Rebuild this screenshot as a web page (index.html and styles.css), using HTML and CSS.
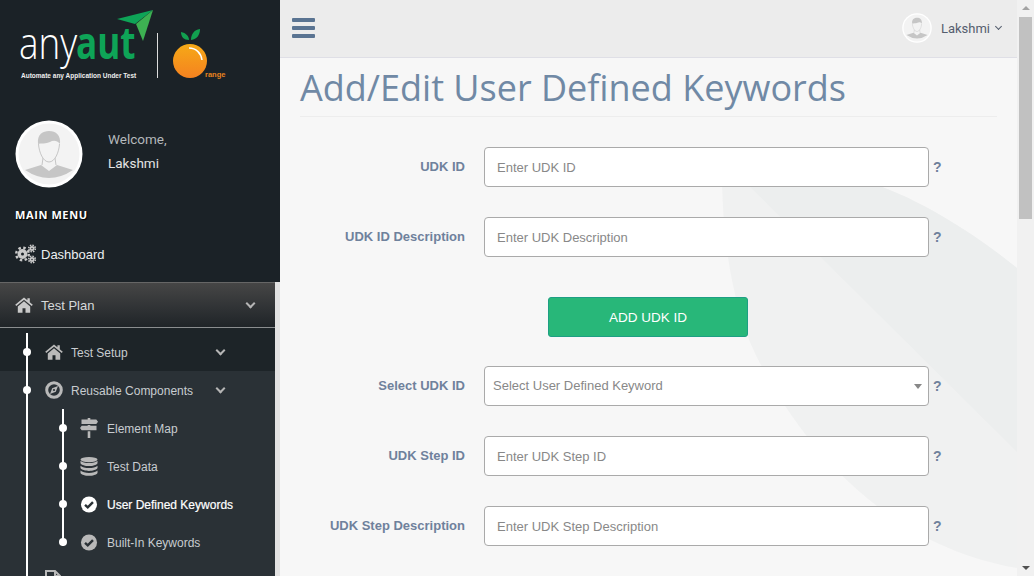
FILE: index.html

```html
<!DOCTYPE html>
<html lang="en">
<head>
    <meta charset="UTF-8">
    <meta name="viewport" content="width=device-width, initial-scale=1.0">
    <title>Add/Edit User Defined Keywords</title>
    <link rel="stylesheet" href="styles.css">
</head>
<body>

<svg class="defs" width="0" height="0">
    <symbol id="i-home" viewBox="0 0 18 16">
        <path d="M9 .5.2 7.800l1.100 1.300L9 2.700l7.700 6.400 1.100-1.300-3-2.500V1.200h-2.400v2.100z"/>
        <path d="M2.800 9.400 9 4.200l6.200 5.200V15.800h-4.700v-4.500h-3v4.500H2.800z"/>
    </symbol>
    <symbol id="i-check" viewBox="0 0 18 18">
        <circle cx="9" cy="9" r="8.500"/>
        <path d="M4.800 9.300 7.700 12l5.500-5.500" fill="none" stroke="#2a3136" stroke-width="2.600"/>
    </symbol>
    <symbol id="i-user" viewBox="0 0 68 68">
        <circle cx="34" cy="34" r="33.500" fill="#fff"/>
        <circle cx="34" cy="34" r="30.500" fill="#f3f3f3"/>
        <path d="M10 50 26 45l8 6 8-6 16 5Q34 66 10 50z" fill="#c6c6c6"/>
        <path d="M23.500 24C24 32 28 42 34 42s10-10 10.500-18M28 38l-1 7M40 38l1 7" fill="none" stroke="#c6c6c6"/>
        <path d="M23 24C22 14 28 11 34 11c7 0 12 4 11 13-3-4-7-4-10-2-4 2-9 1-12 2z" fill="#c6c6c6"/>
    </symbol>
</svg>

<aside class="sidebar">
    <div class="sidebar-top">
        <svg class="logo" width="240" height="90" viewBox="0 0 240 90">
            <polygon points="117,19 153,10 135,24" fill="#0ea457"/>
            <polygon points="153,10 136,24 143,41" fill="#3db152"/>
            <text transform="translate(19 59) scale(.82 1)" class="logo-any">any</text>
            <text transform="translate(76 59) scale(.78 1)" class="logo-aut">aut</text>
            <text x="21" y="77.500" class="logo-tag">Automate any Application Under Test</text>
            <rect x="157" y="33" width="1" height="45" fill="#ddd"/>
            <defs>
                <linearGradient id="orange" x1="0" y1="0" x2="0" y2="1">
                    <stop offset="0" stop-color="#f6a917"/>
                    <stop offset="1" stop-color="#f58220"/>
                </linearGradient>
            </defs>
            <circle cx="190" cy="61" r="17" fill="url(#orange)"/>
            <path d="M189 48c7 0 12 5 13 12" fill="none" stroke="#fff" stroke-width="1.500"/>
            <path d="M181 32c5 1 8 4 8 8-5 0-8-3-8-8zM200 29c0 6-3 10-9 11 0-6 3-10 9-11z" fill="#12a04f"/>
            <text x="205" y="77" class="logo-range">range</text>
        </svg>
        <div class="profile">
            <svg class="profile-pic" width="68" height="68"><use href="#i-user"/></svg>
            <div class="profile-text">
                <span class="welcome">Welcome,</span>
                <span class="profile-name">Lakshmi</span>
            </div>
        </div>
        <h3 class="menu-title">MAIN MENU</h3>
        <a class="dash-link">
            <svg class="nav-icon" width="22" height="20" viewBox="0 0 22 20">
                <g fill="none" stroke="#c9c9c9">
                    <circle cx="7.500" cy="10" r="3.200" stroke-width="3.400"/>
                    <circle cx="7.500" cy="10" r="6.300" stroke-width="2.400" stroke-dasharray="2.500 2.450"/>
                    <circle cx="17" cy="4.500" r="1.600" stroke-width="1.800"/>
                    <circle cx="17" cy="4.500" r="3.300" stroke-width="1.600" stroke-dasharray="1.500 1.090"/>
                    <circle cx="17" cy="15.500" r="1.600" stroke-width="1.800"/>
                    <circle cx="17" cy="15.500" r="3.300" stroke-width="1.600" stroke-dasharray="1.500 1.090"/>
                </g>
            </svg>
            Dashboard
        </a>
    </div>

    <nav class="side-nav">
        <div class="nav-head">
            <svg class="nav-icon" width="18" height="16"><use href="#i-home"/></svg>
            <span>Test Plan</span>
            <i class="chev"></i>
        </div>
        <ul class="tree">
            <li class="tree-item tree-active">
                <svg class="nav-icon" width="18" height="16"><use href="#i-home"/></svg>
                <span>Test Setup</span>
                <i class="chev"></i>
            </li>
            <li class="tree-item">
                <svg class="nav-icon" width="18" height="18" viewBox="0 0 18 18">
                    <circle cx="9" cy="9" r="7.300" fill="none" stroke="currentColor" stroke-width="3"/>
                    <path d="M13 5 10.800 10.800 5 13 7.200 7.200z"/>
                    <circle cx="9" cy="9" r="1.100" fill="#2a3136"/>
                </svg>
                <span>Reusable Components</span>
                <i class="chev"></i>
            </li>
            <li>
                <ul class="tree sub-tree">
                    <li class="tree-item">
                        <svg class="nav-icon" width="18" height="20" viewBox="0 0 18 20">
                            <path d="M7.700 0h2.600v1.500h6L18 3.700l-1.700 2.200H1.500V1.500h6.200zM7.700 7h2.600v.8h6.200v4.400H1.700L0 10l1.700-2.200h6zM7.700 13.200h2.600V20H7.700z"/>
                        </svg>
                        <span>Element Map</span>
                    </li>
                    <li class="tree-item">
                        <svg class="nav-icon" width="17" height="19" viewBox="0 0 17 19">
                            <ellipse cx="8.500" cy="2.600" rx="8.500" ry="2.600"/>
                            <path d="M0 3.800c1.500 1.700 5 2.300 8.500 2.300s7-.6 8.500-2.300v2.400c-1 1.900-5 2.800-8.500 2.800S1 8.100 0 6.200z"/>
                            <path transform="translate(0 4.900)" d="M0 3.800c1.500 1.700 5 2.300 8.500 2.300s7-.6 8.500-2.300v2.400c-1 1.900-5 2.800-8.500 2.800S1 8.100 0 6.200z"/>
                            <path transform="translate(0 9.800)" d="M0 3.800c1.500 1.700 5 2.300 8.500 2.300s7-.6 8.500-2.300v2.400c-1 1.900-5 2.800-8.500 2.800S1 8.100 0 6.200z"/>
                        </svg>
                        <span>Test Data</span>
                    </li>
                    <li class="tree-item tree-current">
                        <svg class="nav-icon" width="17" height="17"><use href="#i-check"/></svg>
                        <span>User Defined Keywords</span>
                    </li>
                    <li class="tree-item">
                        <svg class="nav-icon" width="17" height="17"><use href="#i-check"/></svg>
                        <span>Built-In Keywords</span>
                    </li>
                </ul>
            </li>
            <li class="tree-item tree-last">
                <svg class="nav-icon" width="16" height="20" viewBox="0 0 16 20">
                    <path d="M1 1h9l5 5v13H1z" fill="none" stroke="currentColor" stroke-width="2"/>
                    <path d="M10 1v5h5" fill="none" stroke="currentColor" stroke-width="2"/>
                </svg>
            </li>
        </ul>
    </nav>
</aside>

<div class="main">
    <svg class="swirl" width="737" height="576" viewBox="280 0 737 576">
        <path class="swirl-light" d="M722 170C722 230 730 310 762 367 790 420 830 470 877 506 920 540 970 560 1017 568V268C960 222 900 190 860 180 820 172 770 168 722 170z"/>
        <path class="swirl-dark" d="M733 170 1017 452V268C960 222 900 190 860 180 820 172 770 168 733 170z"/>
    </svg>

    <header class="topbar">
        <div class="hamburger"><span></span><span></span><span></span></div>
        <div class="user-menu">
            <svg class="user-pic" width="30" height="30"><use href="#i-user"/></svg>
            <span>Lakshmi</span>
            <i class="chev-thin"></i>
        </div>
    </header>

    <div class="content">
        <h1>Add/Edit User Defined Keywords</h1>

        <form class="udk-form">
            <div class="form-row">
                <label for="udkId">UDK ID</label>
                <input type="text" id="udkId" placeholder="Enter UDK ID">
                <b class="help">?</b>
            </div>
            <div class="form-row">
                <label for="udkDesc">UDK ID Description</label>
                <input type="text" id="udkDesc" placeholder="Enter UDK Description">
                <b class="help">?</b>
            </div>
            <div class="button-row">
                <button type="button">ADD UDK ID</button>
            </div>
            <div class="form-row">
                <label for="udkSelect">Select UDK ID</label>
                <div class="select-wrap">
                    <select id="udkSelect">
                        <option>Select User Defined Keyword</option>
                    </select>
                </div>
                <b class="help">?</b>
            </div>
            <div class="form-row">
                <label for="stepId">UDK Step ID</label>
                <input type="text" id="stepId" placeholder="Enter UDK Step ID">
                <b class="help">?</b>
            </div>
            <div class="form-row">
                <label for="stepDesc">UDK Step Description</label>
                <input type="text" id="stepDesc" placeholder="Enter UDK Step Description">
                <b class="help">?</b>
            </div>
        </form>
    </div>
</div>

<div class="scrollbar">
    <i class="arrow-up"></i>
    <div class="thumb"></div>
    <i class="arrow-down"></i>
</div>

</body>
</html>
```

FILE: styles.css

```css
* {
    box-sizing: border-box;
}

html, body {
    height: 576px;
    overflow: hidden;
}

body {
    display: flex;
    margin: 0;
    font-family: "Liberation Sans", Arial, sans-serif;
    background-color: #f7f7f7;
}

.defs {
    position: absolute;
}

/* sidebar */
.sidebar {
    width: 280px;
    height: 576px;
    flex: none;
    overflow: hidden;
    background: #e2e2e2;
}

.sidebar-top {
    height: 282px;
    background: #1b2227;
}

.logo {
    display: block;
}

.logo-any {
    font-family: "Open Sans", sans-serif;
    font-weight: 300;
    font-size: 45px;
    fill: #fff;
}

.logo-aut {
    font-family: "Open Sans", sans-serif;
    font-weight: 700;
    font-size: 45px;
    fill: #0ea457;
}

.logo-tag {
    font-family: "Liberation Sans", sans-serif;
    font-weight: 700;
    font-size: 6.500px;
    fill: #eee;
}

.logo-range {
    font-family: "Liberation Sans", sans-serif;
    font-weight: 700;
    font-size: 7.500px;
    fill: #e8821e;
}

.profile {
    display: flex;
    align-items: center;
    gap: 25px;
    padding: 30px 0 0 15px;
}

.profile-pic {
    display: block;
}

.profile-text {
    display: flex;
    flex-direction: column;
    gap: 7px;
    margin-top: -6px;
    font-family: Roboto, sans-serif;
    font-size: 13.500px;
    line-height: 17px;
}

.welcome {
    color: #b4b8bb;
}

.profile-name {
    color: #e4e4e4;
}

.menu-title {
    margin: 20px 0 0 15px;
    font-family: "Open Sans", sans-serif;
    font-size: 11px;
    font-weight: 700;
    line-height: 14px;
    letter-spacing: .6px;
    color: #fff;
    text-shadow: 1px 1px 1px #000;
}

.dash-link {
    display: flex;
    align-items: center;
    gap: 4px;
    margin: 22px 0 0 15px;
    height: 20px;
    font-size: 13px;
    color: #eceff1;
}

.nav-icon {
    flex: none;
    fill: currentColor;
}

.side-nav {
    width: 275px;
    height: 294px;
    background: #2a3136;
    color: #cfd3d6;
    overflow: hidden;
}

.nav-head {
    display: flex;
    align-items: center;
    gap: 8px;
    height: 46px;
    padding: 0 18px 0 15px;
    border-top: 1px solid #666;
    border-bottom: 1px solid #8a8d8f;
    background: linear-gradient(#464646, #1f2428);
    font-size: 13px;
    color: #d6d9db;
}

.nav-head .nav-icon {
    color: #c9c9c9;
}

.nav-head span,
.tree-item span {
    flex: 1;
    white-space: nowrap;
}

.chev {
    width: 7px;
    height: 7px;
    margin-right: 3px;
    margin-top: -3px;
    border-right: 2px solid #b5b5b5;
    border-bottom: 2px solid #b5b5b5;
    transform: rotate(45deg);
}

.tree {
    position: relative;
    margin: 0;
    padding: 0;
    list-style: none;
}

.tree::before {
    content: "";
    position: absolute;
    z-index: 1;
    top: 5px;
    bottom: 0;
    left: 26px;
    width: 2px;
    background: #fff;
}

.tree-item {
    position: relative;
    display: flex;
    align-items: center;
    gap: 8px;
    height: 38px;
    padding: 0 48px 0 45px;
    font-size: 12px;
    color: #c8ccd0;
}

.tree-item span {
    padding-top: 1px;
}

.tree-item::before {
    content: "";
    position: absolute;
    z-index: 1;
    left: 23px;
    top: 15px;
    width: 8px;
    height: 8px;
    border-radius: 50%;
    background: #fff;
}

.tree-item .nav-icon {
    color: #b9b9b9;
}

.tree-active {
    height: 43px;
    padding-top: 5px;
    background: #1d2428;
}

.tree-active::before {
    top: 20px;
}

.sub-tree::before {
    top: 0;
    left: 62px;
    bottom: 15px;
}

.sub-tree .tree-item {
    padding-left: 80px;
    padding-right: 0;
    gap: 9px;
}

.sub-tree .tree-item::before {
    left: 59px;
}

.sub-tree .nav-icon {
    width: 18px;
}

.tree-current,
.tree-current .nav-icon {
    color: #fff;
}

.tree-current span {
    -webkit-text-stroke: .2px #fff;
}

/* main column */
.main {
    position: relative;
    flex: 1;
    height: 576px;
    overflow: hidden;
}

.swirl {
    position: absolute;
    top: 0;
    left: 0;
}

.swirl-light {
    fill: #f0f1f1;
}

.swirl-dark {
    fill: #eceeee;
}

.topbar {
    position: relative;
    display: flex;
    align-items: center;
    justify-content: space-between;
    height: 58px;
    padding: 0 15px 1px 12px;
    background: #ececec;
    border-bottom: 1px solid #dfdfe6;
}

.hamburger {
    display: flex;
    flex-direction: column;
    gap: 4px;
    width: 23px;
}

.hamburger span {
    height: 4px;
    border-radius: 1px;
    background: #5a7492;
}

.user-menu {
    display: flex;
    align-items: center;
    font-family: Roboto, sans-serif;
    font-size: 13px;
    color: #555e6e;
}

.user-pic {
    display: block;
    margin-right: 9px;
}

.chev-thin {
    width: 5px;
    height: 5px;
    margin: -3px 1px 0 6px;
    border-right: 1px solid #555e6e;
    border-bottom: 1px solid #555e6e;
    transform: rotate(45deg);
}

.content {
    position: relative;
    padding: 0 20px;
}

h1 {
    margin: 0;
    height: 59px;
    border-bottom: 1px solid #ededed;
    font-family: "Open Sans", sans-serif;
    font-size: 36px;
    font-weight: 400;
    line-height: 60px;
    color: #7089a5;
    white-space: nowrap;
}

.udk-form {
    padding-top: 30px;
}

.form-row {
    display: flex;
    align-items: center;
    height: 40px;
    margin-bottom: 30px;
}

.form-row label {
    width: 165px;
    margin: -2px 19px 0 0;
    text-align: right;
    font-size: 13px;
    font-weight: 700;
    color: #6f819c;
}

.form-row input,
.form-row select {
    width: 445px;
    height: 40px;
    padding: 0 12px;
    border: 1px solid #aaa;
    border-radius: 4px;
    background: #fff;
    font-family: inherit;
    font-size: 13px;
    color: #888;
}

.form-row input::placeholder {
    color: #888;
    opacity: 1;
}

.form-row select {
    padding: 0 8px 2px;
    appearance: none;
}

.select-wrap {
    position: relative;
    height: 40px;
}

.select-wrap::after {
    content: "";
    position: absolute;
    right: 7px;
    top: 18px;
    border-left: 4px solid transparent;
    border-right: 4px solid transparent;
    border-top: 5px solid #888;
}

.help {
    margin-left: 4px;
    font-size: 14px;
    color: #6f819c;
}

.button-row {
    height: 40px;
    margin: 40px 0 29px 248px;
}

.button-row button {
    width: 200px;
    height: 40px;
    border: 1px solid #1e9f84;
    border-radius: 3px;
    background: #28b779;
    font-family: inherit;
    font-size: 13.500px;
    color: #fff;
}

/* page scrollbar */
.scrollbar {
    position: relative;
    width: 17px;
    height: 576px;
    flex: none;
    background: #f1f1f1;
}

.thumb {
    position: absolute;
    top: 17px;
    left: 2px;
    width: 13px;
    height: 202px;
    background: #c1c1c1;
}

.arrow-up,
.arrow-down {
    position: absolute;
    left: 5px;
    border-left: 4px solid transparent;
    border-right: 4px solid transparent;
}

.arrow-up {
    top: 6px;
    border-bottom: 4px solid #a3a3a3;
}

.arrow-down {
    bottom: 6px;
    border-top: 4px solid #505050;
}
```
